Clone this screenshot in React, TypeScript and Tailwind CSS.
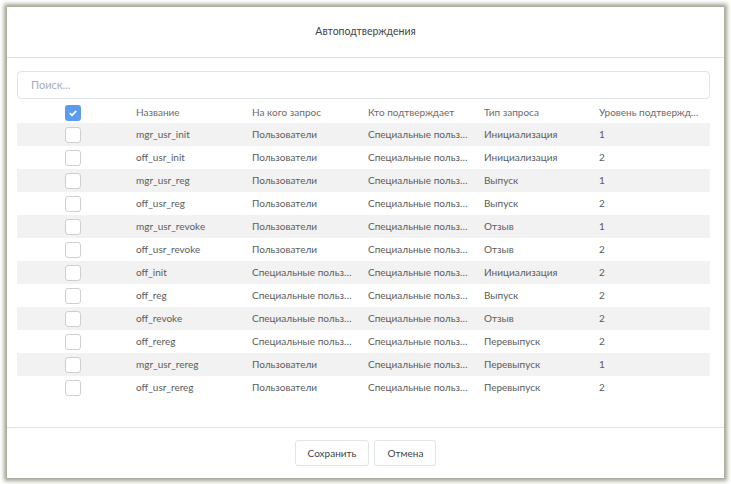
const rows: [string, string, string, string, string][] = [
  ['mgr_usr_init', 'Пользователи', 'Специальные пользователи', 'Инициализация', '1'],
  ['off_usr_init', 'Пользователи', 'Специальные пользователи', 'Инициализация', '2'],
  ['mgr_usr_reg', 'Пользователи', 'Специальные пользователи', 'Выпуск', '1'],
  ['off_usr_reg', 'Пользователи', 'Специальные пользователи', 'Выпуск', '2'],
  ['mgr_usr_revoke', 'Пользователи', 'Специальные пользователи', 'Отзыв', '1'],
  ['off_usr_revoke', 'Пользователи', 'Специальные пользователи', 'Отзыв', '2'],
  ['off_init', 'Специальные пользователи', 'Специальные пользователи', 'Инициализация', '2'],
  ['off_reg', 'Специальные пользователи', 'Специальные пользователи', 'Выпуск', '2'],
  ['off_revoke', 'Специальные пользователи', 'Специальные пользователи', 'Отзыв', '2'],
  ['off_rereg', 'Специальные пользователи', 'Специальные пользователи', 'Перевыпуск', '2'],
  ['mgr_usr_rereg', 'Пользователи', 'Специальные пользователи', 'Перевыпуск', '1'],
  ['off_usr_rereg', 'Пользователи', 'Специальные пользователи', 'Перевыпуск', '2'],
];

const headers = ['Название', 'На кого запрос', 'Кто подтверждает', 'Тип запроса', 'Уровень подтверждения'];

const Cell = ({ children, className = '' }: { children: React.ReactNode; className?: string }) => (
  <div className={`px-2 truncate leading-[15px] ${className}`}>{children}</div>
);

export default function App() {
  return (
    <div className="w-[731px] h-[484px] bg-white p-[7px] pb-[6px] font-['Lato',sans-serif]">
      <div className="h-full flex flex-col bg-white shadow-[0_0_4px_3px_rgba(130,134,110,0.75)]">
        <div className="h-[51px] flex items-center justify-center border-b border-[#dde2e6] text-[10.5px] text-[#444]">
          Автоподтверждения
        </div>

        <div className="flex-1 pl-[10px] pr-[14px] pt-[13px]">
          <div className="h-[28px] border border-[#dfe4e8] rounded-[4px] flex items-center px-[13px] text-[11px] text-[#a7adbb]">
            Поиск...
          </div>

          <div className="mt-[3px] text-[10px]">
            <div className="h-[21px] grid grid-cols-[111px_116px_116px_116px_115px_1fr] items-center text-[#6b6b6b]">
              <div className="flex justify-center">
                <span className="w-[16px] h-[16px] rounded-[3px] bg-[#5a9df0] flex items-center justify-center">
                  <svg width="10" height="10" viewBox="0 0 10 10">
                    <path d="M1.8 5.2 L4 7.3 L8.3 2.8" fill="none" stroke="#fff" strokeWidth="1.8" />
                  </svg>
                </span>
              </div>
              {headers.map((h) => (
                <Cell key={h}>{h}</Cell>
              ))}
            </div>
            {rows.map((r, i) => (
              <div
                key={r[0]}
                className={`h-[23px] grid grid-cols-[111px_116px_116px_116px_115px_1fr] items-center text-[#5c5c5c] ${
                  i % 2 === 0 ? 'bg-[#f2f2f2]' : 'bg-white'
                }`}
              >
                <div className="flex justify-center">
                  <span className="w-[16px] h-[16px] rounded-[3px] border border-[#cfcfcf] bg-white" />
                </div>
                {r.map((v, j) => (
                  <Cell key={j}>{v}</Cell>
                ))}
              </div>
            ))}
          </div>
        </div>

        <div className="h-[51px] border-t border-[#dde2e6] flex items-center justify-center gap-[5px] text-[10px] text-[#444]">
          <button className="h-[26px] px-[12px] border border-[#e2e5e8] rounded-[3px] bg-white">Сохранить</button>
          <button className="h-[26px] px-[12px] border border-[#e2e5e8] rounded-[3px] bg-white">Отмена</button>
        </div>
      </div>
    </div>
  );
}
